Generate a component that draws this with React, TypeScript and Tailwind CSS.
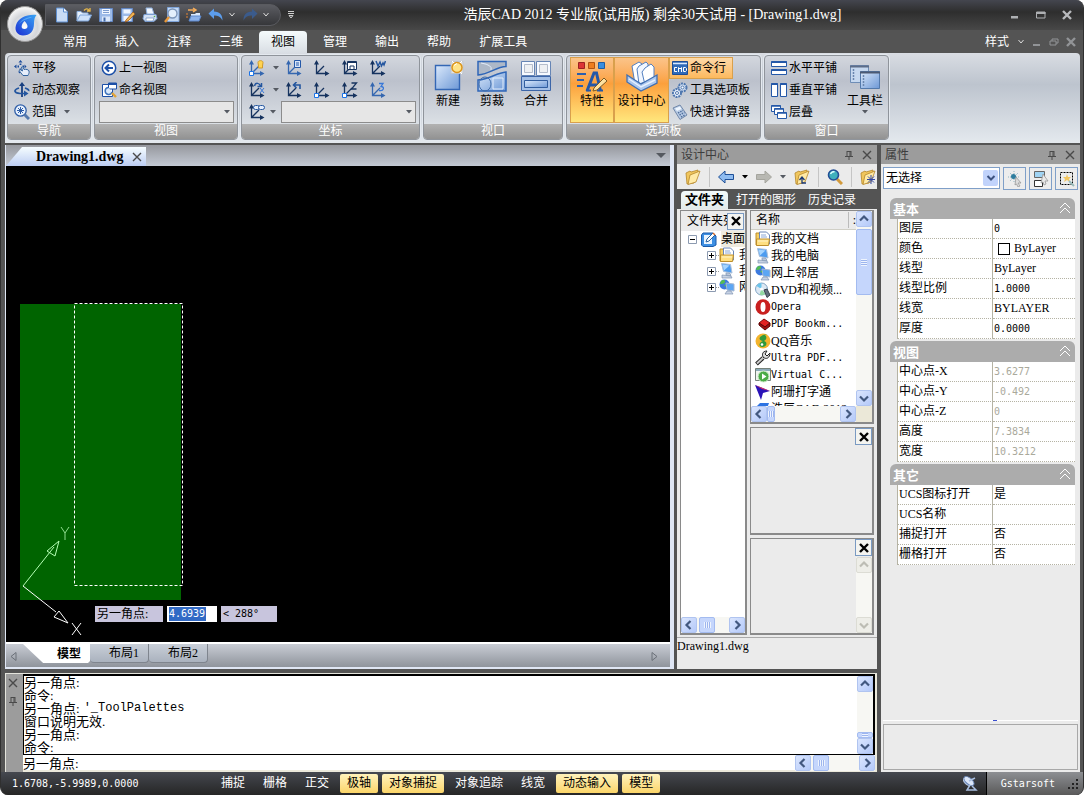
import React, { useState } from 'react'

type Kids = { children?: React.ReactNode }

const Icon = ({ children, big }: Kids & { big?: boolean }) => (
    <svg viewBox={big ? '0 0 32 32' : '0 0 16 16'} className={big ? 'h-8 w-8 shrink-0' : 'h-4 w-4 shrink-0'} fill="none" aria-hidden="true">
        {children}
    </svg>
)

const Caret = ({ dark }: { dark?: boolean }) => (
    <svg viewBox="0 0 6 4" className="h-1 w-1.5 shrink-0" aria-hidden="true">
        <path d="M0 0h6L3 3.5z" fill={dark ? '#000' : '#555a62'} />
    </svg>
)

const Chevron = () => (
    <svg viewBox="0 0 8 6" className="h-1.5 w-2 shrink-0" aria-hidden="true" fill="none">
        <path d="M1.5 1l2.5 3 2.5-3" stroke="#ddd" />
    </svg>
)

const Pin = () => (
    <svg viewBox="0 0 10 10" className="h-2.5 w-2.5" fill="none" aria-hidden="true">
        <path d="M3 1v5M7 1v5M3 1.5h4M1 6.5h8M5 7v3M6 2v4" stroke="#4a4a4a" />
    </svg>
)

const Cross = ({ color = '#4a4a4a', heavy }: { color?: string; heavy?: boolean }) => (
    <svg viewBox="0 0 10 10" className="h-2.5 w-2.5" fill="none" aria-hidden="true">
        <path d="M1 1l8 8M9 1l-8 8" stroke={color} strokeWidth={heavy ? 2.4 : 1.4} />
    </svg>
)

/* quick access icons */
const NewIcon = () => (
    <Icon>
        <path d="M2.500 1h7l4 4v10h-11z" fill="#c9dcf5" stroke="#5f8fd0" />
        <path d="M9.500 1v4h4" fill="#fff" stroke="#5f8fd0" />
    </Icon>
)
const OpenIcon = () => (
    <Icon>
        <path d="M1 14V4.500h4l1.500 1.500H12v3" fill="#e8f1fc" stroke="#8fb1de" />
        <path d="M1 14l3-6h11.500l-3 6z" fill="#cfe1f8" stroke="#7ea6dc" />
        <path d="M8 3.500c2-2.500 4-2 5 0M11 4h3V1" stroke="#eab949" strokeWidth="1.300" />
    </Icon>
)
const SaveIcon = () => (
    <Icon>
        <path d="M1.500 1.500h13v13h-13z" fill="#9dbbe8" stroke="#6287c4" />
        <path d="M4 2h8v5H4z" fill="#eef5ff" />
        <path d="M5 3.500h6M5 5.500h6" stroke="#7d9dcf" />
        <path d="M4 9.500h8v5H4z" fill="#dbe8fa" />
        <path d="M5.500 10.500h2v4h-2z" fill="#466da9" />
    </Icon>
)
const SaveAsIcon = () => (
    <Icon>
        <path d="M1.500 1.500h11v13h-11z" fill="#9dbbe8" stroke="#6287c4" />
        <path d="M3.500 2.500h7v4h-7zM3.500 9h7v5h-7z" fill="#eef5ff" />
        <path d="M6 13l7-8 2 2-7 7-3 1z" fill="#f0b552" stroke="#a05a1e" strokeWidth=".8" />
    </Icon>
)
const PrintIcon = () => (
    <Icon>
        <path d="M4 1h6l2 6H5z" fill="#f2f7ff" stroke="#92b3e0" />
        <path d="M2 7.500h12l1 4-3 3H3l-2-3z" fill="#d4e1f4" stroke="#7b9dcf" />
        <path d="M4 11h8l-1 3H4z" fill="#fff" stroke="#6e8fc0" strokeWidth=".7" />
        <circle cx="12.500" cy="9.500" r=".8" fill="#4bb04b" />
    </Icon>
)
const PreviewIcon = () => (
    <Icon>
        <path d="M3.500.5H15v14H3.500z" fill="#c5daf5" stroke="#7fa4d9" />
        <circle cx="8.500" cy="6.500" r="4.500" fill="#e3effc" stroke="#7c95b9" strokeWidth="1.400" />
        <path d="M5 10l-4 5" stroke="#e8983a" strokeWidth="2.400" />
    </Icon>
)
const TransferIcon = () => (
    <Icon>
        <path d="M2 3h8M7 1l3 2-3 2" stroke="#f3ac5b" strokeWidth="1.500" />
        <path d="M5 7h4l1-1h4v3H5z" fill="#dbe8fb" />
        <path d="M3 14l2-5h10l-2 5z" fill="#8db2ea" stroke="#5d88cc" />
        <path d="M1 6v6" stroke="#e28434" strokeDasharray="2 1" />
    </Icon>
)
const UndoIcon = ({ dim }: { dim?: boolean }) => (
    <Icon>
        <path
            d={dim ? 'M15.500 6.500L10 1.500v3C4 4.500 1.500 8 1.500 13.500 3.500 9.500 6 8.500 10 8.500v3.500z' : 'M.5 6.500L6 1.500v3c6 0 8.500 3.500 8.500 9-2-4-4.500-5-8.500-5v3.500z'}
            fill={dim ? '#3b5b8c' : '#5c9dec'}
        />
    </Icon>
)

/* ribbon icons */
const PanIcon = () => (
    <Icon>
        <path d="M6.500 0L4.500 2.500h4zM0 6.500l2.500-2v4z" fill="#1c4d9c" />
        <path d="M6.500 3.500v1.500M3.500 6.500H5M8.500 6.500H10M6.500 8.500V10" stroke="#1c4d9c" strokeWidth="1.800" />
        <path d="M12.500 6.500l-2-2v4zM4 11.500h3l-1.500 2z" fill="#1c4d9c" />
        <path d="M7 13c-1.500-2-2.500-3-1-3.500l2.500 1.500-1-4c1-1 1.500 0 2.500 2.500 2-.5 4.500 0 5 1.500.5 2-.5 3-1 4.500H9z" fill="#e6eefb" stroke="#33649f" />
    </Icon>
)
const OrbitIcon = () => (
    <Icon>
        <path d="M8 2v13" stroke="#173f80" strokeWidth="1.800" />
        <path d="M8 0l3 4H5z" fill="#173f80" />
        <path d="M5 6C-1 8 0 11 6 11.500h5M14.500 9c.5-1-.5-2-3.500-3" stroke="#24569f" strokeWidth="1.700" />
        <path d="M10 8.500l4.500 3-4.500 3z" fill="#24569f" />
    </Icon>
)
const ExtentsIcon = () => (
    <Icon>
        <circle cx="6.500" cy="6.500" r="5.700" fill="#e6f0fd" stroke="#2e5da8" strokeWidth="1.300" />
        <path d="M6.500 3v7M3 6.500h7M4 4l5 5M9 4L4 9" stroke="#2e5da8" />
        <path d="M10.500 10.500l4.500 4.500" stroke="#5579ad" strokeWidth="3" />
    </Icon>
)
const PrevViewIcon = () => (
    <Icon>
        <circle cx="8" cy="8" r="6.700" fill="#fff" stroke="#1c50a8" strokeWidth="1.500" />
        <path d="M12 8H4.500M8 4.500L4.500 8 8 11.500" stroke="#1c50a8" strokeWidth="2" />
    </Icon>
)
const NamedViewIcon = () => (
    <Icon>
        <path d="M1.500 2.500h10v12h-10z" fill="#fff" stroke="#1c50a8" />
        <path d="M7.500 1h8v6h-8z" fill="#fff" stroke="#1c50a8" />
        <path d="M7.500 2h8" stroke="#1c50a8" strokeWidth="2" />
        <path d="M7 5.500a3.500 3.500 0 1 0 4 4.500" fill="#d9e9fb" stroke="#3f74bd" strokeWidth="1.500" />
        <path d="M11 11l4 4" stroke="#e2a336" strokeWidth="2.400" />
    </Icon>
)

const UcsIcon = ({ light, node, children }: Kids & { light?: boolean; node?: boolean }) => {
    const c = light ? '#3567b0' : '#16335f'
    return (
        <svg viewBox="0 0 17 16" className="h-4 w-[17px] shrink-0" fill="none" aria-hidden="true">
            <path d="M3.500 2v11.500h11M3.500 13.500L11 6" stroke={c} strokeWidth="1.300" />
            <path d="M3.500 0L6 4.500H1zM16.500 13.500L12 16v-5z" fill={c} />
            {node && <path d="M1.500 11.500h4v4h-4z" fill="#fff" stroke="#1c74e8" />}
            {children}
        </svg>
    )
}

const NewViewIcon = () => (
    <Icon big>
        <path d="M3.500 5.500h24v24h-24z" fill="url(#blueFill)" stroke="#3467b5" strokeWidth="1.400" />
        <path d="M19 1.500h12v12H19z" fill="#dfe3e8" stroke="#c0c5cc" />
        <circle cx="25" cy="7.500" r="5" fill="#ffe489" stroke="#dc951c" strokeWidth="1.500" />
        <path d="M22 5.500l3-2M20 1l2 2M30 1l-2 2M30 14l-2-2" stroke="#fff" />
    </Icon>
)
const ClipViewIcon = () => (
    <Icon big>
        <path d="M2 1.500h28v5C20 7 14 14 2 15z" fill="#adb8c8" stroke="#2f66b8" strokeWidth="1.500" />
        <path d="M2 20c12-1 18-7 28-8v19H2z" fill="url(#blueFill)" stroke="#2f66b8" strokeWidth="1.500" />
        <ellipse cx="9" cy="24" rx="6" ry="7" stroke="#416da9" />
        <path d="M5 3q12 2 10 7M17 18h10v11H17z" stroke="#e3edfb" />
    </Icon>
)
const JoinViewIcon = () => (
    <Icon big>
        <path d="M1.500 1.500h13v14h-13zM16.500 1.500h14v14h-14z" fill="#f7faff" stroke="#6685b5" />
        <path d="M4.500 4.500h8v8h-8zM19.500 4.500h8v8h-8z" fill="#eef0f3" stroke="#b4bccb" />
        <path d="M1.500 16.500h29v14h-29z" fill="#a5c0e6" stroke="#3c65a8" />
        <path d="M4.500 20.500h23v7h-23z" fill="url(#blueFill)" stroke="#315d9e" />
    </Icon>
)
const PropsIcon = () => (
    <Icon big>
        <path d="M2.500 2.500h6v6h-6z" fill="#dc3535" stroke="#9c2222" />
        <path d="M12.500 2.500h6v6h-6z" fill="#ee7d1e" stroke="#b05412" />
        <path d="M22.500 2.500h6v6h-6z" fill="#398ee0" stroke="#205da3" />
        <path d="M1 14h9M1 20h7M1 26h6" stroke="#2b5fad" strokeWidth="1.800" />
        <path d="M11 31l7-18h2.500l4 18M14 25h9" stroke="#2458a8" strokeWidth="3" />
        <path d="M10 30.500h5M21 30.500h6" stroke="#2458a8" strokeWidth="2" />
        <path d="M18 28l10-10 3 3-10 9-4 1z" fill="#ffe2a0" stroke="#7c5a23" />
    </Icon>
)
const DesignIcon = () => (
    <Icon big>
        <path d="M6 6l7-4 3 2 1 17-8 3z" fill="#fff" stroke="#527fc0" />
        <path d="M11 9l2-3 7-4 2 2v17l-9 3z" fill="#f0f6ff" stroke="#527fc0" />
        <path d="M16 12l3-4 6-4 3 3v13l-9 5z" fill="#fff" stroke="#527fc0" />
        <path d="M1 15l14 9 16-9v8l-16 8L1 22z" fill="#adc8ee" stroke="#406fb2" strokeWidth="1.300" />
        <path d="M3 19l12 8 14-7" stroke="#e7f1ff" strokeWidth="1.500" />
    </Icon>
)
const ToolbarsIcon = () => (
    <Icon big>
        <path d="M1.500 5.500h18v17h-18z" fill="#c6d8ef" stroke="#6e8db6" />
        <path d="M1 6.500h19" stroke="#5d6d88" strokeWidth="2" />
        <path d="M11.500 11.500h19v17h-19z" fill="url(#blueFill)" stroke="#5379ab" />
        <path d="M11 12.500h20" stroke="#4c5a73" strokeWidth="2" />
        <path d="M4.500 9v11M14.500 15v11" stroke="#6a86ae" strokeWidth="1.500" strokeDasharray="2 1" />
    </Icon>
)
const CmdIcon = () => (
    <Icon>
        <path d="M.5 1.500h15v13H.5z" fill="#316ab8" stroke="#1e4c94" />
        <path d="M1 3.500h14" stroke="#d8e8ff" strokeWidth="1.500" />
        <path d="M5 7.500H2.500v4H5M6.500 12V7.500L8 9l1.500-1.500V12M11.500 7.500h2l1 1v2l-1 1h-2z" stroke="#fff" />
    </Icon>
)
const GearsIcon = () => (
    <Icon>
        <circle cx="10.500" cy="5.500" r="4" fill="#d7e3f5" stroke="#4f77af" strokeWidth="2" strokeDasharray="2 .8" />
        <circle cx="5" cy="11" r="4" fill="#e9f1fd" stroke="#4f77af" strokeWidth="2" strokeDasharray="2 .8" />
        <circle cx="10.500" cy="5.500" r="1.500" fill="#fff" stroke="#4f77af" />
        <circle cx="5" cy="11" r="1.500" fill="#fff" stroke="#4f77af" />
    </Icon>
)
const CalcIcon = () => (
    <Icon>
        <path d="M1 4l7-3 7 10-7 4.500z" fill="#b8cbe5" stroke="#7188a9" />
        <path d="M3 4.500l5-2 1.500 2.500-4.500 2z" fill="#eef6ff" />
        <path d="M6 9l5-2.500M7.500 11l5-2.500M9 13l4-2" stroke="#50709d" strokeWidth="1.500" strokeDasharray="1.500 1" />
    </Icon>
)
const TileHIcon = () => (
    <Icon>
        <path d="M.5 1.500h15v5H.5zM.5 9.500h15v5H.5z" fill="#fff" stroke="#2458a8" />
        <path d="M.5 2h15M.5 10h15" stroke="#2458a8" strokeWidth="2" />
    </Icon>
)
const TileVIcon = () => (
    <Icon>
        <path d="M.5 1.500h6v13h-6zM9.500 1.500h6v13h-6z" fill="#fff" stroke="#2458a8" />
        <path d="M.5 2h6M9.500 2h6" stroke="#2458a8" strokeWidth="2" />
    </Icon>
)
const CascadeIcon = () => (
    <Icon>
        <path d="M.5 1.500h9v6h-9z" fill="#fff" stroke="#2458a8" />
        <path d="M3.500 4.500h9v6h-9z" fill="#fff" stroke="#2458a8" />
        <path d="M6.500 8.500h9v6h-9z" fill="#fff" stroke="#2458a8" />
        <path d="M.5 2h9M3.500 5h9M6.500 9h9" stroke="#2458a8" strokeWidth="1.500" />
    </Icon>
)

/* file icons */
const FolderIcon = ({ children }: Kids) => (
    <Icon>
        <path d="M1 4l4-2 1 1 7-2v2l-4 11-7 1z" fill="#f0c65d" stroke="#b5862b" strokeWidth=".8" />
        <path d="M5 6l10-4-4 11-8 2.500z" fill="#ffeaa6" stroke="#b5862b" strokeWidth=".8" />
        {children}
    </Icon>
)
const DocsIcon = () => (
    <Icon>
        <path d="M1 2h3l1 2h2v10H1z" fill="#f5cf62" stroke="#be8f2c" />
        <path d="M4.500 1h7l3 3v9h-10z" fill="#fff" stroke="#6b86b8" />
        <path d="M6 4h5M6 6h6" stroke="#8aa6d6" />
        <path d="M1.500 8h13l-1 6.500h-12z" fill="#ffdf80" stroke="#be8f2c" />
        <path d="M3 10h10" stroke="#fff4cb" />
    </Icon>
)
const ComputerIcon = () => (
    <Icon>
        <path d="M2.500.5l9 1 1.500 8.500-8.500-1.500z" fill="#4c9cf0" stroke="#a9bed9" />
        <path d="M3.500 1.500l7 1-5.500 5z" fill="#a6d5ff" />
        <path d="M7 10l4 .5 1 2-5-.5zM3 12l9 1 1 2H3z" fill="#c8d3e4" stroke="#7e93b2" strokeWidth=".7" />
    </Icon>
)
const NetworkIcon = () => (
    <Icon>
        <circle cx="5.500" cy="5.500" r="5" fill="#3c7ade" />
        <path d="M2 2c2-2 5-1 4 1S3 5 1 5zM5 6l4-1-1 4z" fill="#55bd51" />
        <path d="M7 4l8 1v7l-7-1z" fill="#5ca6f4" stroke="#a5b7d2" />
        <path d="M8 12h4l2 3H6z" fill="#c7d2e4" stroke="#7f93b2" strokeWidth=".7" />
    </Icon>
)
const DvdIcon = () => (
    <Icon>
        <circle cx="6.500" cy="7" r="6" fill="#dce8f3" stroke="#82a4c4" />
        <path d="M6.500 7L1.500 4a6 6 0 0 1 5-3z" fill="#69c4ec" />
        <path d="M6.500 7l4 5a6 6 0 0 1-6 .5z" fill="#93d9a2" />
        <circle cx="6.500" cy="7" r="1.500" fill="#fff" />
        <path d="M9 8l3-1 3 6-3 2.500z" fill="#63707e" stroke="#39434e" />
    </Icon>
)
const OperaIcon = () => (
    <Icon>
        <ellipse cx="8" cy="8" rx="7.500" ry="7.800" fill="#c9201f" />
        <ellipse cx="8" cy="8" rx="2.500" ry="5" fill="#fff" />
    </Icon>
)
const BookIcon = () => (
    <Icon>
        <path d="M4 7l5-4 6 4-5 4z" fill="#e32222" stroke="#7a0909" />
        <path d="M4 7v2l6 5 5-4V7l-5 4z" fill="#a40e0e" stroke="#5b0505" />
    </Icon>
)
const QQIcon = () => (
    <Icon>
        <circle cx="8" cy="8" r="7.500" fill="#f3b32c" />
        <path d="M8 2c-6 3-3 6 0 6-5 2-4 6-1 6 5 0 6-5 2-6 3-2 3-4 1-6l3-1z" fill="#2f9a3b" />
        <circle cx="7" cy="11.500" r="1.300" fill="#fff" />
    </Icon>
)
const WrenchIcon = () => (
    <Icon>
        <path d="M1.500 14L8 8" stroke="#222" strokeWidth="4" />
        <path d="M2 13.500L9 7" stroke="#ccc" strokeWidth="2" />
        <path d="M12 1C7 1 7 5 8 7c3 3 7 1 7-4l-3 3-2-2z" fill="#ddd" stroke="#222" />
    </Icon>
)
const VirtualIcon = () => (
    <Icon>
        <path d="M.5 1.500h15v12H.5z" fill="#f0f4ef" stroke="#75827a" />
        <path d="M1 3h14" stroke="#8baab8" strokeWidth="2" />
        <circle cx="8.500" cy="9.500" r="5.500" fill="#4bab46" stroke="#d6edd2" />
        <path d="M7 6.500v6l4.500-3z" fill="#fff" />
    </Icon>
)
const PointerIcon = () => (
    <Icon>
        <path d="M0 1l15 6-7 2-2 7z" fill="#2a13b8" />
        <path d="M0 1l7 4 8 2z" fill="#e03060" />
    </Icon>
)
const CadIcon = () => (
    <Icon>
        <path d="M2 5l3-3h9l-3 8-9 3z" fill="#2d73e2" />
    </Icon>
)
const DesktopIcon = () => (
    <Icon>
        <path d="M2 2h10l3 3v9l-3 1.500H2L.5 14V4z" fill="#3d8fe3" stroke="#1a5bab" />
        <path d="M3 4h8v9H3z" fill="#e9f4ff" />
        <path d="M5 11l1-3 6-6 2 2-6 6z" fill="#fff" stroke="#2a629f" />
        <path d="M12 2l2 2" stroke="#d06a2c" strokeWidth="1.500" />
    </Icon>
)
const SearchIcon = () => (
    <Icon>
        <path d="M10 10l5 5" stroke="#d29a3c" strokeWidth="3" />
        <circle cx="6.500" cy="6" r="5" fill="#3fb1bd" stroke="#234e96" strokeWidth="1.600" />
        <path d="M3.500 5c1-2 3-2.500 4-2" stroke="#dff" strokeWidth="1.500" />
    </Icon>
)
const ArrowIcon = ({ right }: { right?: boolean }) => (
    <Icon>
        <path
            d={right ? 'M15.500 8L9 2v3.500H.5v5H9V14z' : 'M.5 8L7 2v3.500h8.500v5H7V14z'}
            fill={right ? '#b8b8b2' : '#8fbcf0'}
            stroke={right ? '#a5a59e' : '#1e4f96'}
        />
    </Icon>
)

const tabs = ['常用', '插入', '注释', '三维', '视图', '管理', '输出', '帮助', '扩展工具']

const files = [
    { icon: <DocsIcon />, name: '我的文档' },
    { icon: <ComputerIcon />, name: '我的电脑' },
    { icon: <NetworkIcon />, name: '网上邻居' },
    { icon: <DvdIcon />, name: 'DVD和视频...' },
    { icon: <OperaIcon />, name: 'Opera', mono: true },
    { icon: <BookIcon />, name: 'PDF Bookm...', mono: true },
    { icon: <QQIcon />, name: 'QQ音乐' },
    { icon: <WrenchIcon />, name: 'Ultra PDF...', mono: true },
    { icon: <VirtualIcon />, name: 'Virtual C...', mono: true },
    { icon: <PointerIcon />, name: '阿珊打字通' },
    { icon: <CadIcon />, name: '浩辰CAD 2012' },
]

const sections = [
    {
        title: '基本',
        rows: [['图层', '0'], ['颜色', 'ByLayer'], ['线型', 'ByLayer'], ['线型比例', '1.0000'], ['线宽', 'BYLAYER'], ['厚度', '0.0000']],
    },
    {
        title: '视图',
        locked: true,
        rows: [['中心点-X', '3.6277'], ['中心点-Y', '-0.492'], ['中心点-Z', '0'], ['高度', '7.3834'], ['宽度', '10.3212']],
    },
    {
        title: '其它',
        rows: [['UCS图标打开', '是'], ['UCS名称', ''], ['捕捉打开', '否'], ['栅格打开', '否']],
    },
]

const log = [
    { text: '另一角点:' },
    { text: '命令:' },
    { text: '另一角点:', command: "'_ToolPalettes" },
    { text: '窗口说明无效.' },
    { text: '另一角点:' },
    { text: '命令:' },
]

function Panel({ title, className, children }: Kids & { title: string; className: string }) {
    return (
        <section className={`flex h-[85px] shrink-0 flex-col overflow-hidden rounded-sm border border-[#8f949b] bg-linear-to-b from-[#d3d7de] via-[#bcc1cc] via-30% to-[#e6ebee] shadow-[0_0_0_1px_#e4e9ef] ${className}`}>
            <div className="flex flex-1 pt-px">{children}</div>
            <h2 className="h-[15px] bg-linear-to-b from-[#b2b2b2] to-[#929292] text-center leading-[14px] text-white">{title}</h2>
        </section>
    )
}

function RibbonButton({ icon, label, caret, className = '' }: { icon: React.ReactNode; label: string; caret?: boolean; className?: string }) {
    return (
        <button type="button" className={`flex h-[22px] items-center gap-0.5 whitespace-nowrap ${className}`}>
            {icon}
            <span>{label}</span>
            {caret && <span className="ml-1.5"><Caret /></span>}
        </button>
    )
}

function BigButton({ icon, label, active, caret, className = '' }: { icon: React.ReactNode; label: string; active?: boolean; caret?: boolean; className?: string }) {
    return (
        <button
            type="button"
            className={`flex h-[66px] flex-col items-center whitespace-nowrap pt-0.5 ${active ? 'border border-[#d9a04c] bg-linear-to-b from-[#fbc489] via-[#fba03c] via-40% to-[#ffe77c]' : 'border border-transparent'} ${className}`}
        >
            {icon}
            <span className="leading-[18px]">{label}</span>
            {caret && <Caret />}
        </button>
    )
}

function Combo({ label }: { label: string }) {
    return (
        <div className="relative h-[22px] w-[135px]">
            <select aria-label={label} className="h-full w-full appearance-none border border-[#8c8c8c] bg-[#e6e6e6]">
                <option value=""></option>
            </select>
            <span className="pointer-events-none absolute top-1/2 right-1 flex -translate-y-1/2"><Caret /></span>
        </div>
    )
}

const arrows = {
    up: 'M4 9.500L8 5.500l4 4',
    down: 'M4 6.500l4 4 4-4',
    left: 'M9.500 4L5.500 8l4 4',
    right: 'M6.500 4l4 4-4 4',
}

function ScrollButton({ dir, off }: { dir: keyof typeof arrows; off?: boolean }) {
    return (
        <button
            type="button"
            aria-label={dir}
            className={`h-4 w-4 shrink-0 rounded-xs border ${off ? 'border-[#dcdcd4] bg-[#eeeee8]' : 'border-[#b0c4f0] bg-linear-to-br from-[#dbe6fe] to-[#b4c9f9]'}`}
        >
            <svg viewBox="1 1 14 14" className="block h-full w-full" fill="none">
                <path d={arrows[dir]} stroke={off ? '#bdbdb4' : '#42587f'} strokeWidth="2.200" />
            </svg>
        </button>
    )
}

function Thumb({ vertical, className }: { vertical?: boolean; className: string }) {
    return (
        <div className={`flex shrink-0 items-center justify-center rounded-xs border border-[#a3bbf0] bg-[#c5d6fc] ${className}`}>
            <div className={vertical ? 'h-[7px] w-1.5 bg-[repeating-linear-gradient(to_bottom,#eef4fe_0_1px,#9db5ee_1px_2px)]' : 'h-1.5 w-[7px] bg-[repeating-linear-gradient(to_right,#eef4fe_0_1px,#9db5ee_1px_2px)]'} />
        </div>
    )
}

function DockTitle({ title }: { title: string }) {
    return (
        <div className="flex h-[19px] shrink-0 items-center gap-2 bg-[#9c9c9c] pr-[5px] pl-1 text-[#3d3d3d]">
            <h2 className="flex-1">{title}</h2>
            <button type="button" aria-label="固定"><Pin /></button>
            <button type="button" aria-label="关闭"><Cross /></button>
        </div>
    )
}

const SmallClose = () => (
    <button type="button" aria-label="关闭" className="flex h-[17px] w-[17px] shrink-0 items-center justify-center border border-[#7a9ac2] bg-[#f4f4f0]">
        <Cross color="#000" heavy />
    </button>
)

function Header() {
    const [tab, setTab] = useState('视图')

    return (
        <header className="relative">
            <div className="flex h-[30px] items-center bg-linear-to-b from-[#44464f] via-[#2e2e2e] via-40% to-[#484848] pl-11">
                <div className="flex h-[22px] w-[236px] items-center gap-1.5 rounded-r-full border border-[#5a5b60] bg-linear-to-b from-[#5c5d63] to-[#36373a] pl-2">
                    <button type="button" aria-label="新建"><NewIcon /></button>
                    <button type="button" aria-label="打开"><OpenIcon /></button>
                    <button type="button" aria-label="保存"><SaveIcon /></button>
                    <button type="button" aria-label="另存为"><SaveAsIcon /></button>
                    <button type="button" aria-label="打印"><PrintIcon /></button>
                    <button type="button" aria-label="打印预览"><PreviewIcon /></button>
                    <button type="button" aria-label="传递"><TransferIcon /></button>
                    <button type="button" aria-label="撤销" className="flex items-center gap-1"><UndoIcon /><Chevron /></button>
                    <button type="button" aria-label="重做" className="flex items-center gap-1"><UndoIcon dim /><Chevron /></button>
                </div>
                <button type="button" aria-label="自定义" className="ml-1.5">
                    <svg viewBox="0 0 8 8" className="h-2 w-2" fill="none"><path d="M1 .5h6M1 2.500h6M2 4.500h4L4 7z" stroke="#ccc" /></svg>
                </button>
                <h1 className="flex-1 text-center text-sm whitespace-nowrap text-white">浩辰CAD 2012 专业版(试用版) 剩余30天试用 - [Drawing1.dwg]</h1>
                <div className="flex items-center gap-4 pr-[11px]">
                    <button type="button" aria-label="最小化"><svg viewBox="0 0 10 10" className="h-2.5 w-2.5"><path d="M1 6h7v2.500H1z" fill="#aeb0b3" /></svg></button>
                    <button type="button" aria-label="最大化"><svg viewBox="0 0 10 10" className="h-2.5 w-2.5" fill="none"><path d="M.5 2h8.500v6H.5z" stroke="#aeb0b3" /><path d="M0 3h9.500" stroke="#aeb0b3" strokeWidth="2" /></svg></button>
                    <button type="button" aria-label="关闭"><Cross color="#b8babd" heavy /></button>
                </div>
            </div>
            <div className="flex h-[23px] items-end bg-[#545454] pl-[50px]">
                <nav className="flex gap-1">
                    {tabs.map((t) => (
                        <button
                            key={t}
                            type="button"
                            onClick={() => setTab(t)}
                            className={`h-[22px] rounded-t px-3 ${t === tab ? 'bg-linear-to-b from-[#f5fbfc] to-[#d9dee4] text-black' : 'text-white'}`}
                        >
                            {t}
                        </button>
                    ))}
                </nav>
                <div className="ml-auto flex h-[22px] items-center gap-[7px] pr-[7px] text-white">
                    <button type="button" className="flex items-center gap-2">样式<Chevron /></button>
                    <button type="button" aria-label="最小化窗口"><svg viewBox="0 0 10 10" className="h-2.5 w-2.5"><path d="M1 7h7v2H1z" fill="#929497" /></svg></button>
                    <button type="button" aria-label="还原窗口"><svg viewBox="0 0 10 10" className="h-2.5 w-2.5" fill="none"><path d="M1 4h6v4H1zM3 4V2h6v4H7" stroke="#929497" /></svg></button>
                    <button type="button" aria-label="关闭窗口"><Cross color="#929497" heavy /></button>
                </div>
            </div>
            <button type="button" aria-label="应用程序菜单" className="absolute top-1.5 left-1.5 h-9 w-9">
                <svg viewBox="0 0 36 36" className="h-9 w-9">
                    <defs>
                        <radialGradient id="orb" cx=".5" cy=".6" r=".55">
                            <stop offset="0" stopColor="#fff" />
                            <stop offset=".65" stopColor="#d4d6da" />
                            <stop offset="1" stopColor="#f4f4f4" />
                        </radialGradient>
                        <linearGradient id="drop" x1="0" y1="1" x2="1" y2="0">
                            <stop offset="0" stopColor="#1c2ed2" />
                            <stop offset="1" stopColor="#39a5f5" />
                        </linearGradient>
                    </defs>
                    <circle cx="18" cy="18" r="17.500" fill="url(#orb)" stroke="#999" />
                    <path fillRule="evenodd" d="M29.500 9C20 8 11 12 9 19c-2 6 2 10.500 7 10.500 7 0 11-4 11-12 0-4 1-7 2.500-8.500zM17.500 15c4 4 4 8 0 8-4.500 0-3-5 0-8z" fill="url(#drop)" />
                    <path d="M12 18c3-5 8-7 13-7-3 2-8 2-13 7z" fill="#6dc4ff" opacity=".6" />
                </svg>
            </button>
        </header>
    )
}

function Ribbon() {
    return (
        <div className="mr-[3px] ml-1 flex h-[90px] gap-[3px] overflow-hidden rounded-t bg-linear-to-b from-[#d9dde3] via-[#bdc4ce] via-35% to-[#e4e9ee] px-0.5 pt-0.5">
            <Panel title="导航" className="w-[84px]">
                <div className="pl-1.5">
                    <RibbonButton icon={<PanIcon />} label="平移" />
                    <RibbonButton icon={<OrbitIcon />} label="动态观察" />
                    <RibbonButton icon={<ExtentsIcon />} label="范围" caret />
                </div>
            </Panel>
            <Panel title="视图" className="w-36">
                <div className="pl-1">
                    <RibbonButton icon={<PrevViewIcon />} label="上一视图" className="px-0.5" />
                    <RibbonButton icon={<NamedViewIcon />} label="命名视图" className="px-0.5" />
                    <Combo label="视图" />
                </div>
            </Panel>
            <Panel title="坐标" className="w-[179px]">
                <div className="pl-1.5">
                    <div className="flex h-[22px] items-center gap-[11px]">
                        <button type="button" aria-label="原点" className="-mr-[5px] flex items-center gap-2">
                            <UcsIcon light node><path d="M10.500 6L10 2.500C10 0 15 0 15 2.500L14.500 6v2h-4z" fill="#ffd352" stroke="#cf9a2a" /></UcsIcon>
                            <Caret />
                        </button>
                        <button type="button" aria-label="命名坐标"><UcsIcon light><path d="M9.500.5h6v7h-6z" fill="#d9e6fa" stroke="#2458a8" /><path d="M11 3h3M11 5h3" stroke="#2458a8" /></UcsIcon></button>
                        <button type="button" aria-label="世界坐标"><UcsIcon /></button>
                        <button type="button" aria-label="视图坐标"><UcsIcon><path d="M6.500 1.500h9v8h-9z" fill="#fff" stroke="#16335f" /><path d="M6.500 2.500h9M9 9V6h4v3" stroke="#16335f" /></UcsIcon></button>
                        <button type="button" aria-label="世界"><UcsIcon><path d="M7 1l2 5 2-4 1.500 4L14 3l1 2 1.500-4" stroke="#24569f" strokeWidth="1.500" /></UcsIcon></button>
                    </div>
                    <div className="flex h-[22px] items-center gap-[11px]">
                        <button type="button" aria-label="旋转" className="-mr-[5px] flex items-center gap-2">
                            <UcsIcon><path d="M6.500 4c1-4 5-3 6 0M9.500 4.500h4V1" stroke="#24569f" strokeWidth="1.500" /><path d="M12 6l4 5M16 6l-4 5" stroke="#3878d8" /></UcsIcon>
                            <Caret />
                        </button>
                        <button type="button" aria-label="上一个坐标"><UcsIcon><path d="M9 3h6v4M11.500 0L8.500 3l3 3" stroke="#24569f" strokeWidth="1.600" /></UcsIcon></button>
                        <button type="button" aria-label="原点坐标"><UcsIcon node /></button>
                        <button type="button" aria-label="Z轴"><UcsIcon node><path d="M10.500 1h5l-5 6h5" stroke="#16335f" strokeWidth="1.300" /></UcsIcon></button>
                        <button type="button" aria-label="三点"><UcsIcon light><path d="M10 1.500h4L12 4.500c4 0 3 5-2 4" stroke="#3878d8" strokeWidth="1.300" /></UcsIcon></button>
                    </div>
                    <div className="flex items-center gap-[5px]">
                        <button type="button" aria-label="显示图标" className="flex items-center gap-[5px]">
                            <UcsIcon><rect x="5.500" y="1.500" width="6" height="4" rx="2" fill="#e6effc" stroke="#24569f" /><rect x="10.500" y="1.500" width="6" height="4" rx="2" fill="#e6effc" stroke="#24569f" /></UcsIcon>
                            <Caret />
                        </button>
                        <Combo label="坐标" />
                    </div>
                </div>
            </Panel>
            <Panel title="视口" className="w-[140px]">
                <div className="flex flex-1 pl-0.5">
                    <BigButton icon={<NewViewIcon />} label="新建" className="w-11" />
                    <BigButton icon={<ClipViewIcon />} label="剪裁" className="w-11" />
                    <BigButton icon={<JoinViewIcon />} label="合并" className="w-11" />
                </div>
            </Panel>
            <Panel title="选项板" className="w-[195px]">
                <div className="flex pl-[3px]">
                    <BigButton icon={<PropsIcon />} label="特性" active className="w-11" />
                    <BigButton icon={<DesignIcon />} label="设计中心" active className="w-[55px]" />
                    <div>
                        <RibbonButton icon={<CmdIcon />} label="命令行" className="border border-[#d9a04c] bg-linear-to-b from-[#fdd9a8] to-[#fdb95c] pr-1.5 pl-0.5" />
                        <RibbonButton icon={<GearsIcon />} label="工具选项板" className="pl-[3px]" />
                        <RibbonButton icon={<CalcIcon />} label="快速计算器" className="pl-[3px]" />
                    </div>
                </div>
            </Panel>
            <Panel title="窗口" className="w-[125px]">
                <div className="pl-1.5">
                    <RibbonButton icon={<TileHIcon />} label="水平平铺" />
                    <RibbonButton icon={<TileVIcon />} label="垂直平铺" />
                    <RibbonButton icon={<CascadeIcon />} label="层叠" />
                </div>
                <BigButton icon={<ToolbarsIcon />} label="工具栏" caret className="ml-1.5 w-11" />
            </Panel>
        </div>
    )
}

function Drawing() {
    return (
        <main className="flex min-w-0 flex-1 flex-col border-r-4 border-b-2 border-l border-[#dfe6f4] bg-linear-to-b from-[#8d9097] to-[#b9c0cb]">
            <div className="flex h-[21px] shrink-0 items-end bg-linear-to-b from-[#96989e] to-[#c4cad4] pr-1">
                <div className="flex h-[19px] w-[140px] items-center justify-between bg-linear-to-b from-[#f6fdff] to-[#bccdf2] pr-1 pl-[30px] [clip-path:polygon(16px_0,100%_0,100%_100%,0_100%)]">
                    <span className="text-sm font-bold">Drawing1.dwg</span>
                    <button type="button" aria-label="关闭"><Cross /></button>
                </div>
                <button type="button" aria-label="文档列表" className="mb-2 ml-auto">
                    <svg viewBox="0 0 10 5" className="h-[5px] w-2.5"><path d="M0 0h10L5 5z" fill="#555960" /></svg>
                </button>
            </div>
            <div className="relative min-h-0 flex-1 overflow-hidden bg-black">
                <svg className="h-full w-full" fill="none">
                    <path d="M14 138h161v296H14z" fill="#006400" />
                    <path d="M68.500 137.500h108v282h-108z" stroke="#fff" strokeDasharray="3 2" />
                    <path d="M17 420l31-39M41 385l12-10-4 15z" stroke="#b5ffb5" />
                    <path d="M17 420l33 26M53 445l9 12-14-6z" stroke="#fff" />
                    <path d="M55 361l4 6 4-6M59 367v7" stroke="#8fdc8f" />
                    <path d="M66 457l9 12M75 457l-9 12" stroke="#fff" />
                </svg>
                <div className="absolute top-[440px] left-[89px] flex gap-1 leading-4">
                    <label htmlFor="dist" className="w-[68px] bg-[#c8c5dd] pl-0.5">另一角点:</label>
                    <div className="flex w-[50px] items-center bg-white pl-0.5">
                        <input id="dist" defaultValue="4.6939" className="w-[37px] bg-[#316ac5] font-['DejaVu_Sans_Mono',monospace] text-[10px] leading-[14px] text-white" />
                    </div>
                    <div className="w-14 bg-[#c8c5dd] pl-0.5 font-['DejaVu_Sans_Mono',monospace] text-[10px] leading-4">&lt; 288°</div>
                </div>
            </div>
            <div className="flex h-[25px] shrink-0 items-start border-t-2 border-white bg-linear-to-b from-[#c9cdd5] to-[#8f949c] px-1">
                <button type="button" aria-label="向左" className="mt-2">
                    <svg viewBox="0 0 7 9" className="h-[9px] w-[7px]" fill="none"><path d="M6 .5v8L1 4.500z" stroke="#6b7078" /></svg>
                </button>
                <button type="button" className="ml-1.5 h-[19px] w-[67px] bg-white pl-[34px] text-left font-bold [clip-path:polygon(0_0,100%_0,100%_90%,97%_100%,30%_100%)]">模型</button>
                <button type="button" className="h-[19px] w-[59px] rounded-b border-r border-b border-[#7f858e] bg-linear-to-b from-[#c9cfd8] to-[#aab2be] pl-2.5">布局1</button>
                <button type="button" className="h-[19px] w-[59px] rounded-b border-r border-b border-[#7f858e] bg-linear-to-b from-[#c9cfd8] to-[#aab2be] pl-2.5">布局2</button>
                <button type="button" aria-label="向右" className="mt-2 mr-2 ml-auto">
                    <svg viewBox="0 0 7 9" className="h-[9px] w-[7px]" fill="none"><path d="M1 .5v8l5-4z" stroke="#6b7078" /></svg>
                </button>
            </div>
        </main>
    )
}

const Expander = ({ open }: { open?: boolean }) => (
    <svg viewBox="0 0 9 9" className="h-[9px] w-[9px] shrink-0" fill="none">
        <path d="M.5.5h8v8h-8z" fill="#fff" stroke="#8c9ab0" />
        <path d={open ? 'M2 4.500h5' : 'M2 4.500h5M4.500 2v5'} stroke="#000" />
    </svg>
)

function DesignCenter() {
    const branches = [
        { icon: <DocsIcon />, name: '我的文档' },
        { icon: <ComputerIcon />, name: '我的电脑' },
        { icon: <NetworkIcon />, name: '网上邻居' },
    ]

    return (
        <aside className="flex w-[200px] shrink-0 flex-col bg-[#ebebeb]">
            <DockTitle title="设计中心" />
            <div className="flex h-[25px] shrink-0 items-center overflow-hidden pl-2">
                <button type="button" aria-label="加载"><FolderIcon /></button>
                <i className="mx-2 h-5 w-px shrink-0 bg-[#c5c5c5]" />
                <button type="button" aria-label="后退" className="flex items-center gap-2"><ArrowIcon /><Caret dark /></button>
                <button type="button" aria-label="前进" className="ml-2 flex items-center gap-2"><ArrowIcon right /><Caret /></button>
                <button type="button" aria-label="上级" className="ml-2"><FolderIcon><path d="M12 14H8V9M5.500 11L8 8l2.500 3" stroke="#1b3a78" strokeWidth="1.300" /></FolderIcon></button>
                <i className="mx-2 h-5 w-px shrink-0 bg-[#c5c5c5]" />
                <button type="button" aria-label="搜索"><SearchIcon /></button>
                <i className="mx-2 h-5 w-px shrink-0 bg-[#c5c5c5]" />
                <button type="button" aria-label="收藏夹"><FolderIcon><path d="M11 6v9M7 10.500h8M8 7.500l6 6M14 7.500l-6 6" stroke="#2f46a5" /></FolderIcon></button>
            </div>
            <nav className="flex h-5 shrink-0 items-end bg-[#545454] pl-1 whitespace-nowrap text-white">
                <button type="button" className="h-[18px] rounded-t bg-linear-to-b from-[#f3fbfb] to-[#e1eaea] px-1 text-[13px] leading-[18px] font-bold text-black">文件夹</button>
                <button type="button" className="h-[18px] px-2">打开的图形</button>
                <button type="button" className="h-[18px] px-1">历史记录</button>
            </nav>
            <div className="flex min-h-0 flex-1 gap-[3px] px-[3px] pt-px pb-0.5">
                <div className="flex w-[67px] flex-col border border-r-2 border-b-2 border-[#8a8a8a] bg-white">
                    <div className="flex h-5 items-center bg-[#ebebeb] pr-px pl-1.5 whitespace-nowrap">
                        <span className="min-w-0 flex-1 overflow-hidden">文件夹列表</span>
                        <SmallClose />
                    </div>
                    <ul className="flex-1 overflow-hidden whitespace-nowrap">
                        <li className="flex h-4 items-center gap-1 pl-[7px]">
                            <Expander open />
                            <DesktopIcon />
                            <span className="min-w-0 overflow-hidden bg-[#efebdf]">桌面</span>
                        </li>
                        {branches.map((b) => (
                            <li key={b.name} className="flex h-4 items-center pl-[26px]">
                                <Expander />
                                <i className="w-[3px] shrink-0 border-t border-dotted border-[#999]" />
                                {b.icon}
                                <span className="ml-1 min-w-0 flex-1 overflow-hidden">{b.name}</span>
                            </li>
                        ))}
                    </ul>
                    <div className="flex h-4 bg-[#f7f7f3]">
                        <ScrollButton dir="left" />
                        <Thumb className="ml-0.5 w-4" />
                        <span className="flex-1" />
                        <ScrollButton dir="right" />
                    </div>
                </div>
                <div className="flex min-w-0 flex-1 flex-col gap-[3px]">
                    <div className="flex h-[214px] flex-col border border-r-2 border-b-2 border-[#8a8a8a] bg-white">
                        <div className="flex min-h-0 flex-1">
                            <div className="min-w-0 flex-1 overflow-hidden">
                                <div className="flex h-[19px] items-center border-b border-[#d0cfc6] bg-[#ebebeb] pl-[5px]">
                                    <span className="flex-1">名称</span>
                                    <span className="border-l border-[#bbb] pl-1">:</span>
                                </div>
                                <ul className="overflow-hidden pl-1 whitespace-nowrap">
                                    {files.map((f) => (
                                        <li key={f.name} className="flex h-[17px] items-center">
                                            {f.icon}
                                            <span className={f.mono ? "font-['DejaVu_Sans_Mono',monospace] text-[10px]" : ''}>{f.name}</span>
                                        </li>
                                    ))}
                                </ul>
                            </div>
                            <div className="flex w-4 flex-col bg-[#f7f7f3]">
                                <ScrollButton dir="up" />
                                <Thumb vertical className="mt-0.5 h-[66px]" />
                                <span className="flex-1" />
                                <ScrollButton dir="down" />
                            </div>
                        </div>
                        <div className="flex h-4 bg-[#f7f7f3]">
                            <ScrollButton dir="left" />
                            <Thumb className="w-2" />
                            <span className="flex-1" />
                            <ScrollButton dir="right" />
                            <i className="w-4 bg-[#ebe8d8]" />
                        </div>
                    </div>
                    <div className="flex h-[108px] justify-end border border-r-2 border-b-2 border-[#8a8a8a]">
                        <SmallClose />
                    </div>
                    <div className="flex flex-1 flex-col items-end border border-r-2 border-b-2 border-[#8a8a8a]">
                        <SmallClose />
                        <div className="mt-px flex w-4 flex-1 flex-col justify-between bg-[#f7f7f3]">
                            <ScrollButton dir="up" off />
                            <ScrollButton dir="down" off />
                        </div>
                    </div>
                </div>
            </div>
            <p className="h-8 shrink-0 border-t border-[#aaa] leading-4">Drawing1.dwg</p>
        </aside>
    )
}

function CommandLine() {
    return (
        <section className="flex h-[99px] shrink-0 border-t border-l border-[#e4e4dc] bg-[#ebe9dc] text-[13px]">
            <div className="flex w-[17px] flex-col items-start gap-2 bg-[#9c9c9c] pt-1 pl-0.5">
                <button type="button" aria-label="关闭"><Cross /></button>
                <button type="button" aria-label="固定"><Pin /></button>
            </div>
            <div className="mr-0.5 mb-0.5 flex min-w-0 flex-1 flex-col bg-white">
                <div className="flex h-[82px] border-2 border-b border-l border-black">
                    <div className="flex-1">
                        {log.map((line, i) => (
                            <p key={i} className="flex h-[13px] gap-1 leading-[13px]">
                                {line.text}
                                {line.command && <span className="font-['Liberation_Mono',monospace] text-xs leading-[13px]">{line.command}</span>}
                            </p>
                        ))}
                    </div>
                    <div className="flex w-4 flex-col bg-[#f7f7f3]">
                        <ScrollButton dir="up" />
                        <span className="flex-1" />
                        <Thumb vertical className="h-1.5 overflow-hidden" />
                        <ScrollButton dir="down" />
                    </div>
                </div>
                <div className="flex flex-1 items-center">
                    <label htmlFor="cmd" className="leading-[13px]">另一角点:</label>
                    <input id="cmd" className="h-3.5 min-w-0 flex-1 outline-none" />
                    <div className="flex w-20 bg-[#f7f7f3]">
                        <ScrollButton dir="left" />
                        <Thumb className="ml-0.5 w-4" />
                        <span className="flex-1" />
                        <ScrollButton dir="right" />
                    </div>
                </div>
            </div>
        </section>
    )
}

function Properties() {
    const tool = 'flex h-[23px] w-[23px] shrink-0 items-center justify-center border border-[#7f9fc8] bg-[#ededed]'
    const value = (v: string) => (/^[-\d.]+$/.test(v) ? "font-['DejaVu_Sans_Mono',monospace] text-[10px]" : '')

    return (
        <aside className="flex w-[199px] shrink-0 flex-col bg-[#ebebeb]">
            <DockTitle title="属性" />
            <div className="flex gap-[3px] px-0.5 pt-[3px]">
                <div className="relative flex-1">
                    <select aria-label="选择" className="h-[22px] w-full appearance-none border border-[#7f9fc8] bg-white pl-0.5">
                        <option>无选择</option>
                    </select>
                    <span className="pointer-events-none absolute top-[3px] right-0.5 flex h-4 w-[15px] items-center justify-center rounded-xs bg-[#c1d3fb]">
                        <svg viewBox="0 0 10 8" className="h-2 w-2.5" fill="none"><path d="M1.500 2L5 5.500 8.500 2" stroke="#3c5280" strokeWidth="2" /></svg>
                    </span>
                </div>
                <button type="button" aria-label="选择对象" className={tool}>
                    <Icon><path d="M3 2l8 8M11 2l-8 8M1 6h12M7 0v12" stroke="#8fb3bf" strokeDasharray="1 1" /><circle cx="6.500" cy="5.500" r="2.500" fill="#2e7d9e" /><path d="M9 6l5 6h-3l2 3-2 1-1.500-3L8 14z" fill="#ddd" stroke="#999" strokeWidth=".8" /></Icon>
                </button>
                <button type="button" aria-label="切换选择" className={tool}>
                    <Icon><path d="M1.500.5h10v6h-10z" fill="#9fd3f3" stroke="#666" /><path d="M1.500 9.500h8v6h-8z" fill="#fff" stroke="#333" /><path d="M10 3l5 7h-3l1 3-2 1-1-3-2 1z" fill="#e8e8e8" stroke="#999" strokeWidth=".8" /></Icon>
                </button>
                <button type="button" aria-label="快速选择" className={tool}>
                    <Icon><path d="M1.500 1.500h12v12h-12z" stroke="#000" strokeDasharray="2 1" /><path d="M8 3l1 3h3l-2 2 1 3-3-2-3 2 1-3-2-2h3z" fill="#f3c65f" /><path d="M10 10l5 5" stroke="#9bb" strokeWidth="2" /></Icon>
                </button>
            </div>
            <div className="flex flex-col gap-0.5 pt-2 pr-[5px] pl-[9px]">
                {sections.map((s) => (
                    <section key={s.title}>
                        <h3 className="flex h-[21px] items-center justify-between rounded-t-md bg-[#acacac] pt-0.5 pr-1 pl-[3px] text-[13px] font-bold text-white">
                            {s.title}
                            <svg viewBox="0 0 12 12" className="mb-1 h-3 w-3" fill="none"><path d="M1 6l5-5 5 5M1 11l5-5 5 5" stroke="#fff" /></svg>
                        </h3>
                        <div className="pl-[7px]">
                            <table className="w-full table-fixed border-separate border-spacing-0 border-l border-[#b5b3a4] bg-white">
                                <tbody>
                                    {s.rows.map(([k, v]) => (
                                        <tr key={k} className="h-5">
                                            <th scope="row" className="w-[95px] border-r border-b border-[#b5b3a4] py-0 pl-px text-left leading-[19px] font-normal [border-bottom-style:dotted]">{k}</th>
                                            <td className={`border-b border-dotted border-[#b5b3a4] py-0 pl-px leading-[19px] ${s.locked ? 'text-[#aaa99c]' : ''} ${value(v)}`}>
                                                {k === '颜色' && <i className="mr-1 ml-1 inline-block h-3 w-3 border border-black bg-white align-middle" />}
                                                {v}
                                            </td>
                                        </tr>
                                    ))}
                                </tbody>
                            </table>
                        </div>
                    </section>
                ))}
            </div>
            <div className="mx-0.5 mt-auto mb-0.5">
                <div className="mb-[3px] h-px bg-white pl-[110px]"><div className="h-px w-1 bg-[#3b4fd0]" /></div>
                <div className="h-[46px] border border-[#a8a8a8]" />
            </div>
        </aside>
    )
}

const toggles = [
    { label: '捕捉' },
    { label: '栅格' },
    { label: '正交' },
    { label: '极轴', on: true },
    { label: '对象捕捉', on: true },
    { label: '对象追踪' },
    { label: '线宽' },
    { label: '动态输入', on: true },
    { label: '模型', on: true },
]

function StatusBar() {
    return (
        <footer className="flex h-[23px] shrink-0 items-center bg-linear-to-b from-[#454850] to-[#262626] text-white">
            <span className="w-[213px] pl-[11px] font-['DejaVu_Sans_Mono',monospace] text-[10px]">1.6708,-5.9989,0.0000</span>
            <div className="flex gap-1">
                {toggles.map((t) => (
                    <button
                        key={t.label}
                        type="button"
                        aria-pressed={!!t.on}
                        className={`h-[19px] rounded-xs px-[7px] leading-[19px] ${t.on ? 'bg-linear-to-b from-[#fff2ba] to-[#fbd568] text-black' : ''}`}
                    >
                        {t.label}
                    </button>
                ))}
            </div>
            <div className="mr-2 ml-auto">
                <Icon>
                    <path d="M2 2c-2 4 3 9 8 7z" fill="#8fa8d2" stroke="#c5d5ee" />
                    <ellipse cx="7" cy="5" rx="6" ry="3" transform="rotate(40 7 5)" fill="#dbe6f8" stroke="#6c88b8" />
                    <path d="M7 5l6-3M8 9l-3 5h9l-4-4" stroke="#a9bee0" strokeWidth="1.500" />
                </Icon>
            </div>
            <div className="flex h-full w-[97px] items-center justify-end gap-3 border-l border-black bg-linear-to-b from-[#8d8f93] to-[#5a5a5a] pr-1">
                <span className="font-['DejaVu_Sans_Mono',monospace] text-[10px]">Gstarsoft</span>
                <svg viewBox="0 0 12 12" className="h-3 w-3"><path d="M9 1h2v2H9zM5 5h2v2H5zM9 5h2v2H9zM1 9h2v2H1zM5 9h2v2H5zM9 9h2v2H9z" fill="#222" /></svg>
            </div>
        </footer>
    )
}

export default function App() {
    return (
        <div className="flex h-screen min-h-[700px] flex-col overflow-hidden rounded-lg border-x border-[#303030] bg-[#545454] font-['Liberation_Serif','Noto_Sans_CJK_SC',serif] text-xs text-black">
            <svg className="absolute h-0 w-0" aria-hidden="true">
                <defs>
                    <linearGradient id="blueFill" x1="0" y1="0" x2="1" y2="1">
                        <stop offset="0" stopColor="#dbe9fb" />
                        <stop offset="1" stopColor="#6d98d6" />
                    </linearGradient>
                </defs>
            </svg>
            <Header />
            <Ribbon />
            <div className="mt-0.5 flex min-h-0 flex-1 gap-1 pr-[3px] pl-1">
                <div className="flex min-w-0 flex-1 flex-col gap-1">
                    <div className="flex min-h-0 flex-1 gap-[3px]">
                        <Drawing />
                        <DesignCenter />
                    </div>
                    <CommandLine />
                </div>
                <Properties />
            </div>
            <StatusBar />
        </div>
    )
}
